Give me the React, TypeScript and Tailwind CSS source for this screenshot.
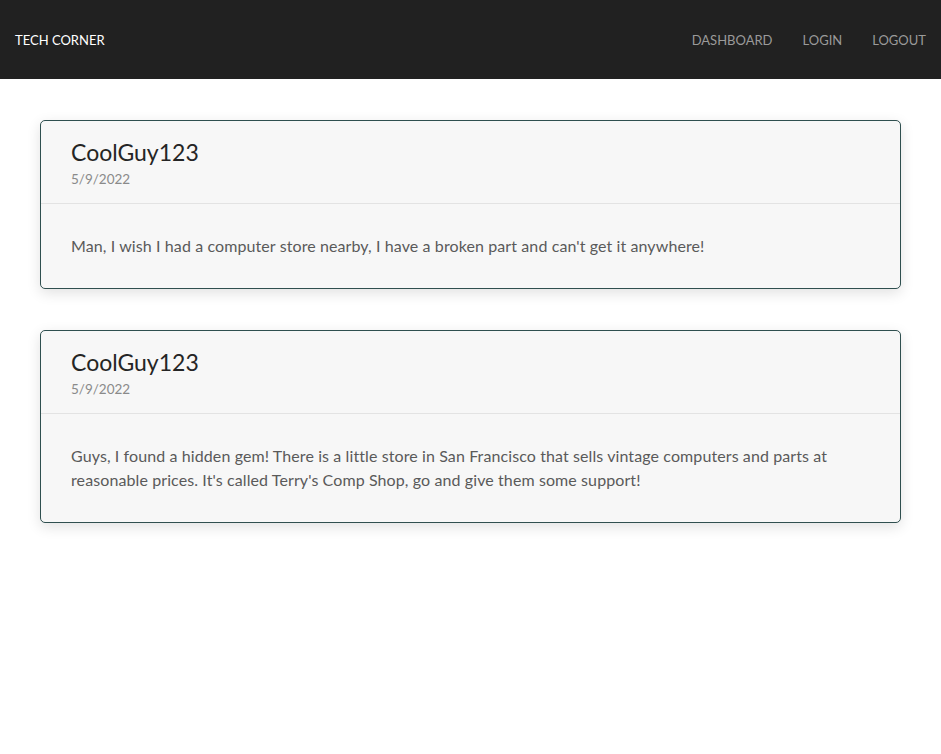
const posts = [
  {
    id: 1,
    author: "CoolGuy123",
    date: "5/9/2022",
    body: "Man, I wish I had a computer store nearby, I have a broken part and can't get it anywhere!",
  },
  {
    id: 2,
    author: "CoolGuy123",
    date: "5/9/2022",
    body: "Guys, I found a hidden gem! There is a little store in San Francisco that sells vintage computers and parts at reasonable prices. It's called Terry's Comp Shop, go and give them some support!",
  },
];

export default function App() {
  return (
    <main className="min-h-screen bg-white font-['Lato',sans-serif]">
      <header className="h-[79px] pt-[2px] bg-[#212121] flex items-center justify-between">
        <a className="pl-[15px] text-[13px] text-white">TECH CORNER</a>
        <nav className="flex items-center">
          <a className="px-[15px] text-[13px] text-[#9a9a9a]">DASHBOARD</a>
          <a className="px-[15px] text-[13px] text-[#9a9a9a]">LOGIN</a>
          <a className="px-[15px] text-[13px] text-[#9a9a9a]">LOGOUT</a>
        </nav>
      </header>

      <div className="px-10 pt-[41px] flex flex-col gap-[41px]">
        {posts.map((post) => (
          <article
            key={post.id}
            className="bg-[#f7f7f7] border border-[#2f4f4f] rounded-[5px] shadow-[0_4px_14px_rgba(0,0,0,0.12)]"
          >
            <div className="px-[30px] pt-[17px] pb-[13px] border-b border-[#e3e3e3]">
              <h2 className="text-[23px] leading-[29px] text-[#252525]">{post.author}</h2>
              <p className="mt-[2px] text-[13.5px] leading-[21px] text-[#8a8a8a]">{post.date}</p>
            </div>
            <div className="px-[30px] pt-[30px] pb-[30px]">
              <p className="text-base leading-6 tracking-[0.1px] text-[#5a5a5a]">{post.body}</p>
            </div>
          </article>
        ))}
      </div>
    </main>
  );
}
